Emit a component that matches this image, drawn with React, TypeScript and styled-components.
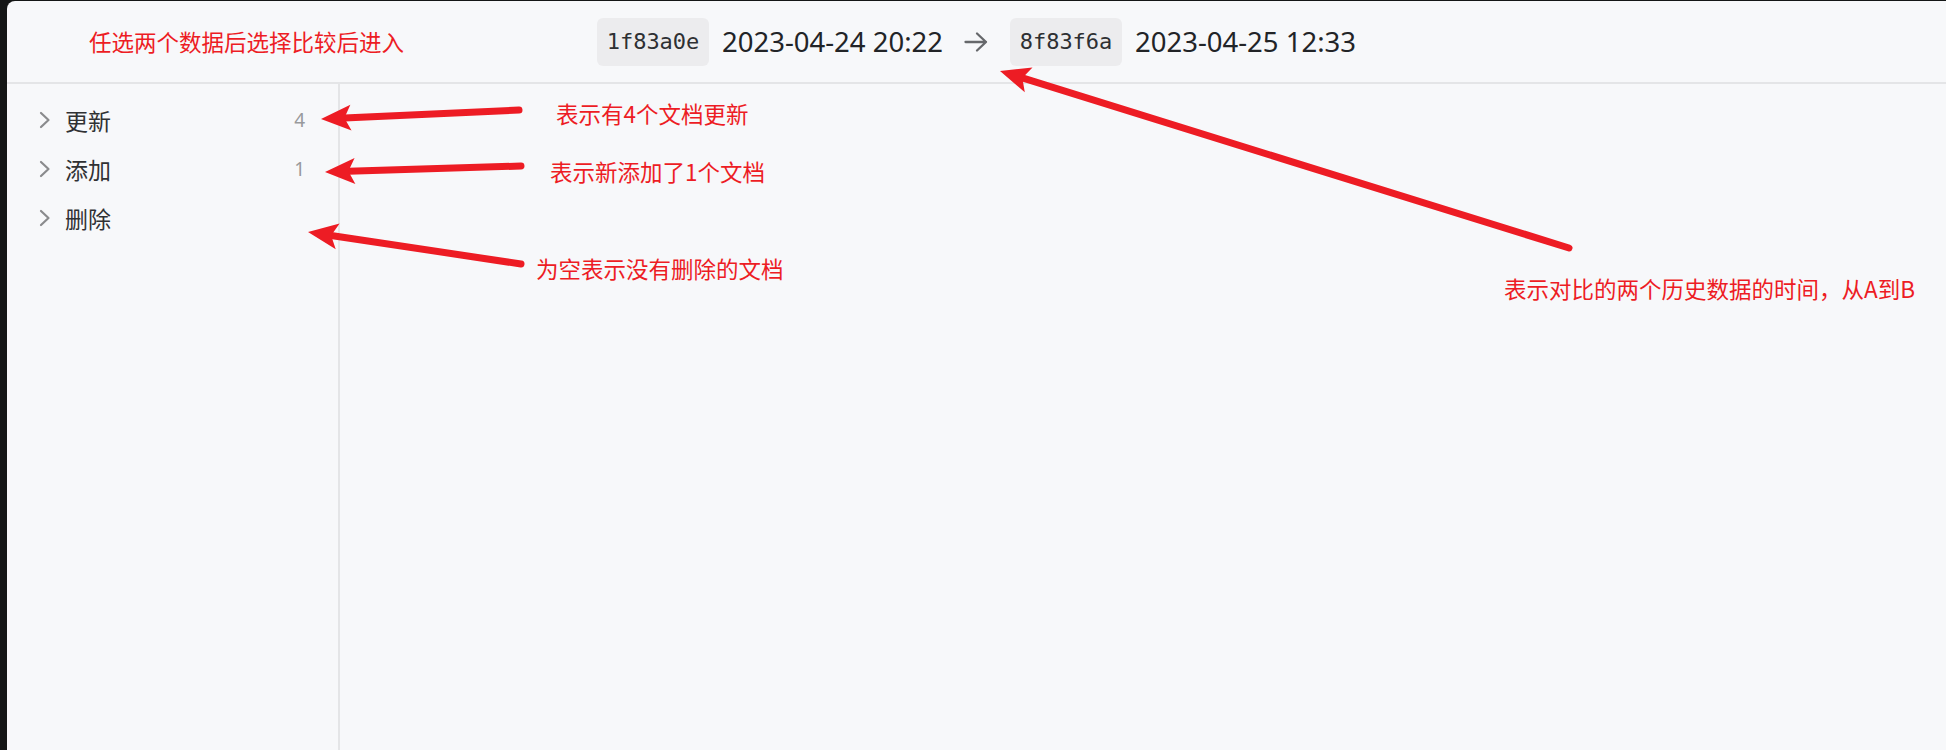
import styled, { createGlobalStyle } from "styled-components"

const GlobalStyle = createGlobalStyle`
html, body {
margin: 0;
padding: 0;
background: #141616;
}
body {
font-family: "Noto Sans", "Noto Sans CJK SC", sans-serif;
}
`

const colors = {
    page: "#f7f8fa",
    line: "#e4e5e7",
    badge: "#ececee",
    ink: "#222427",
    soft: "#999a9c",
    chevron: "#8a8b8d",
    red: "#ed1c24",
}

const Screen = styled.div`
position: relative;
width: 1946px;
height: 750px;
overflow: hidden;
`

const Window = styled.div`
display: flex;
flex-direction: column;
margin: 1px 0 0 7px;
height: 749px;
background: ${colors.page};
border-top-left-radius: 8px;
`

const Header = styled.div`
display: flex;
align-items: center;
justify-content: center;
height: 81px;
border-bottom: 2px solid ${colors.line};
`

const Compare = styled.div`
display: flex;
align-items: center;
gap: 13px;
`

const Hash = styled.span`
display: flex;
align-items: center;
justify-content: center;
width: 112px;
height: 48px;
border-radius: 6px;
background: ${colors.badge};
color: #2e3033;
font-family: "DejaVu Sans Mono", monospace;
font-size: 22px;
`

const Stamp = styled.span`
color: ${colors.ink};
font-size: 27.5px;
line-height: 1;
`

const ArrowSlot = styled.span`
display: flex;
margin: 0 9px 0 8px;
`

const Body = styled.div`
display: flex;
flex: 1;
`

const Sidebar = styled.div`
display: flex;
flex-direction: column;
width: 331px;
padding-top: 11.5px;
border-right: 2px solid ${colors.line};
`

const Row = styled.div`
display: flex;
align-items: center;
height: 49px;
padding: 0 33px 0 32px;
`

const Label = styled.span`
flex: 1;
margin-left: 14px;
color: #303133;
font-family: "Noto Sans CJK SC", sans-serif;
font-size: 23px;
`

const Count = styled.span`
color: ${colors.soft};
font-size: 19px;
`

const Main = styled.div`
flex: 1;
`

const Note = styled.span<{ $x: number; $y: number }>`
position: absolute;
left: ${(p) => p.$x}px;
top: ${(p) => p.$y - 12}px;
color: ${colors.red};
font-family: "Noto Sans CJK SC", sans-serif;
font-size: 22.5px;
line-height: 24px;
white-space: nowrap;
`

const Overlay = styled.svg`
position: absolute;
left: 0;
top: 0;
pointer-events: none;
`

const Chevron = () => (
    <svg width="12" height="18" viewBox="0 0 12 18">
        <polyline points="2,2 9.5,9 2,16" fill="none" stroke={colors.chevron} strokeWidth="2.2" strokeLinecap="round" strokeLinejoin="round" />
    </svg>
)

const RightArrow = () => (
    <svg width="24" height="22" viewBox="0 0 24 22">
        <path d="M1.5 11H22M13 2.5L22 11L13 19.5" fill="none" stroke="#66686b" strokeWidth="2.3" strokeLinecap="round" strokeLinejoin="round" />
    </svg>
)

type Pt = [number, number]

const Pointer = ({ from, to }: { from: Pt; to: Pt }) => {
    const dx = to[0] - from[0]
    const dy = to[1] - from[1]
    const len = Math.hypot(dx, dy)
    const ux = dx / len
    const uy = dy / len
    const nx = -uy
    const ny = ux
    const L = 30
    const W = 13
    const back: Pt = [to[0] - ux * L, to[1] - uy * L]
    const notch: Pt = [to[0] - ux * L * 0.78, to[1] - uy * L * 0.78]
    const head = [
        to,
        [back[0] + nx * W, back[1] + ny * W],
        notch,
        [back[0] - nx * W, back[1] - ny * W],
    ]
        .map((p) => p.join(","))
        .join(" ")
    return (
        <g>
            <line x1={from[0]} y1={from[1]} x2={notch[0]} y2={notch[1]} stroke={colors.red} strokeWidth="7" strokeLinecap="round" />
            <polygon points={head} fill={colors.red} />
        </g>
    )
}

const groups = [
    { name: "更新", count: "4" },
    { name: "添加", count: "1" },
    { name: "删除", count: "" },
]

export default function App() {
    return (
        <Screen>
            <GlobalStyle />
            <Window>
                <Header>
                    <Compare>
                        <Hash>1f83a0e</Hash>
                        <Stamp>2023-04-24 20:22</Stamp>
                        <ArrowSlot>
                            <RightArrow />
                        </ArrowSlot>
                        <Hash>8f83f6a</Hash>
                        <Stamp>2023-04-25 12:33</Stamp>
                    </Compare>
                </Header>
                <Body>
                    <Sidebar>
                        {groups.map((g) => (
                            <Row key={g.name}>
                                <Chevron />
                                <Label>{g.name}</Label>
                                <Count>{g.count}</Count>
                            </Row>
                        ))}
                    </Sidebar>
                    <Main />
                </Body>
            </Window>

            <Overlay width="1946" height="750">
                <Pointer from={[519, 110]} to={[321, 119]} />
                <Pointer from={[521, 166]} to={[325, 172]} />
                <Pointer from={[521, 264]} to={[308, 232]} />
                <Pointer from={[1569, 248]} to={[1000, 71]} />
            </Overlay>

            <Note $x={89} $y={41}>任选两个数据后选择比较后进入</Note>
            <Note $x={556} $y={113}>表示有4个文档更新</Note>
            <Note $x={550} $y={171}>表示新添加了1个文档</Note>
            <Note $x={536} $y={268}>为空表示没有删除的文档</Note>
            <Note $x={1504} $y={288}>表示对比的两个历史数据的时间，从A到B</Note>
        </Screen>
    )
}
